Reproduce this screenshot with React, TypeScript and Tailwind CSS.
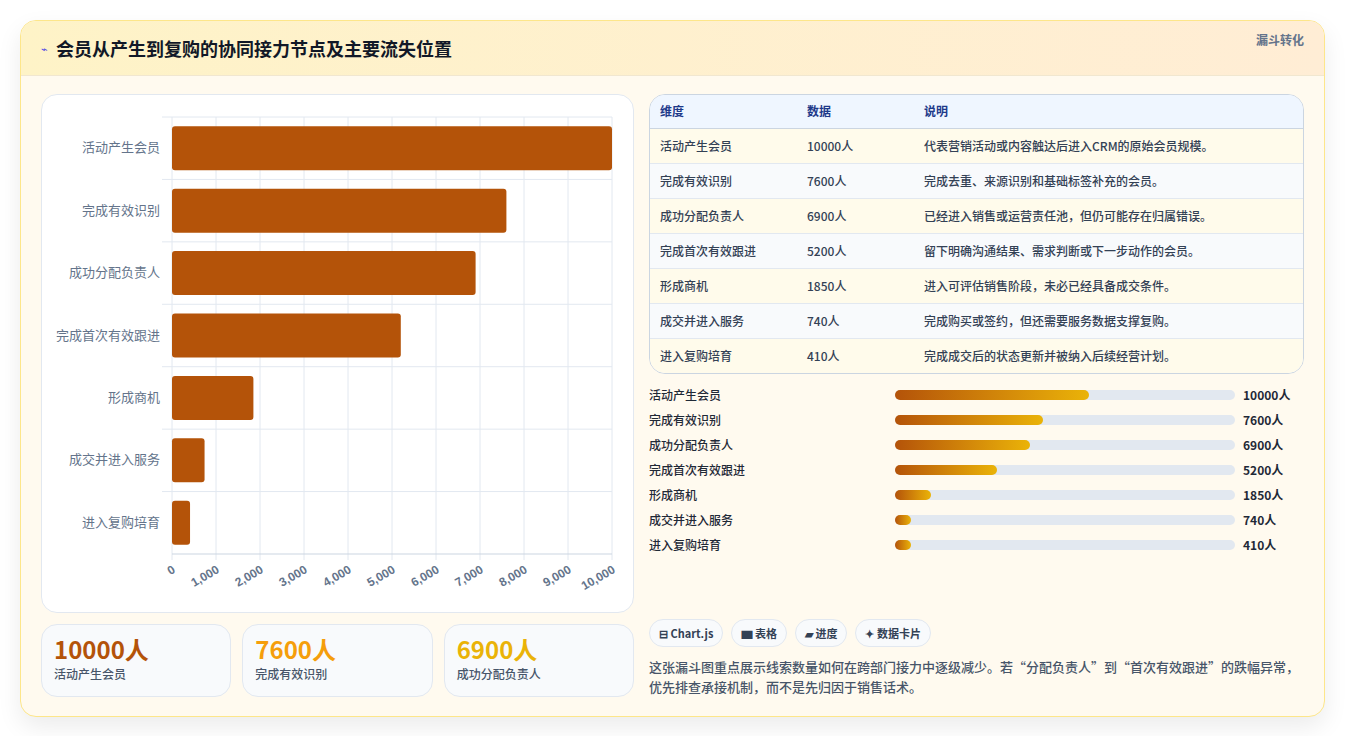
import React from 'react';

const steps = [
  { name: '活动产生会员', value: 10000, desc: '代表营销活动或内容触达后进入CRM的原始会员规模。', pct: 57 },
  { name: '完成有效识别', value: 7600, desc: '完成去重、来源识别和基础标签补充的会员。', pct: 43.5 },
  { name: '成功分配负责人', value: 6900, desc: '已经进入销售或运营责任池，但仍可能存在归属错误。', pct: 39.7 },
  { name: '完成首次有效跟进', value: 5200, desc: '留下明确沟通结果、需求判断或下一步动作的会员。', pct: 30 },
  { name: '形成商机', value: 1850, desc: '进入可评估销售阶段，未必已经具备成交条件。', pct: 10.5 },
  { name: '成交并进入服务', value: 740, desc: '完成购买或签约，但还需要服务数据支撑复购。', pct: 4.8 },
  { name: '进入复购培育', value: 410, desc: '完成成交后的状态更新并被纳入后续经营计划。', pct: 4.8 },
];

const font = { fontFamily: '"Noto Sans CJK SC", "Noto Sans", sans-serif' };

function FunnelChart() {
  const x0 = 130;
  const x1 = 570;
  const y0 = 22;
  const y1 = 459;
  const rowH = (y1 - y0) / steps.length;
  const ticks = Array.from({ length: 11 }, (_, i) => i * 1000);
  return (
    <svg width="593" height="517" className="block">
      {ticks.map((t) => {
        const x = x0 + (t / 10000) * (x1 - x0);
        return <line key={t} x1={x} x2={x} y1={y0} y2={y1 + 6} stroke="#e2e8f0" strokeWidth="1" />;
      })}
      {steps.map((s, i) => (
        <line key={s.name} x1={x0 - 10} x2={x1} y1={y0 + rowH * i} y2={y0 + rowH * i} stroke="#e2e8f0" strokeWidth="1" />
      ))}
      <line x1={x0} x2={x1} y1={y1} y2={y1} stroke="#cbd5e1" strokeWidth="1" />
      {steps.map((s, i) => {
        const cy = y0 + rowH * i + rowH / 2;
        const w = (s.value / 10000) * (x1 - x0);
        return (
          <g key={s.name}>
            <rect x={x0} y={cy - 22} width={w} height={44} rx="3" fill="#b45309" />
            <text x={x0 - 12} y={cy + 4} textAnchor="end" fontSize="13" fill="#64748b" style={font}>
              {s.name}
            </text>
          </g>
        );
      })}
      {ticks.map((t) => {
        const x = x0 + (t / 10000) * (x1 - x0);
        return (
          <text
            key={t}
            x={x + 4}
            y={y1 + 18}
            textAnchor="end"
            fontSize="12"
            fontWeight="700"
            fill="#64748b"
            transform={`rotate(-30 ${x + 4} ${y1 + 18})`}
            style={{ fontFamily: '"Liberation Sans", sans-serif' }}
          >
            {t.toLocaleString('en-US')}
          </text>
        );
      })}
    </svg>
  );
}

export default function App() {
  return (
    <div className="min-h-screen bg-white px-5 py-5" style={font}>
      <div className="overflow-hidden rounded-2xl border border-[#fde68a] bg-[#fffaef] shadow-[0_10px_25px_rgba(0,0,0,0.08)]">
        {/* Header */}
        <div className="flex h-[55px] items-center justify-between border-b border-[#f1e7d0] bg-gradient-to-r from-[#fef3c7] to-[#ffedd5] px-5">
          <div className="flex items-center gap-2">
            <span className="text-[11px] text-[#4f46e5]">⌁</span>
            <h1 className="text-lg font-bold text-[#111827]">会员从产生到复购的协同接力节点及主要流失位置</h1>
          </div>
          <span className="-mt-4 text-xs font-bold text-[#64748b]">漏斗转化</span>
        </div>

        <div className="flex gap-[15px] px-5 pt-[18px] pb-[19px]">
          {/* Left */}
          <div className="flex w-[593px] flex-col gap-[11px]">
            <div className="h-[519px] rounded-2xl border border-[#e2e8f0] bg-white">
              <FunnelChart />
            </div>
            <div className="grid grid-cols-3 gap-[11px]">
              {[
                { v: '10000人', l: '活动产生会员', c: 'text-[#b45309]' },
                { v: '7600人', l: '完成有效识别', c: 'text-[#f59e0b]' },
                { v: '6900人', l: '成功分配负责人', c: 'text-[#eab308]' },
              ].map((k) => (
                <div key={k.l} className="h-[73px] rounded-2xl border border-[#e2e8f0] bg-[#f8fafc] px-3 pt-[9px]">
                  <div className={`text-[24px] leading-[30px] font-bold ${k.c}`}>{k.v}</div>
                  <div className="mt-[2px] text-xs font-medium text-[#475569]">{k.l}</div>
                </div>
              ))}
            </div>
          </div>

          {/* Right */}
          <div className="flex flex-1 flex-col">
            <div className="overflow-hidden rounded-2xl border border-[#cbd5e1] bg-white">
              <table className="w-full text-left text-xs">
                <thead>
                  <tr className="h-[33px] border-b border-[#cbd5e1] bg-[#eff6ff] text-[#1e3a8a]">
                    <th className="w-[157px] pl-[10px] font-bold">维度</th>
                    <th className="w-[117px] font-bold">数据</th>
                    <th className="font-bold">说明</th>
                  </tr>
                </thead>
                <tbody>
                  {steps.map((s, i) => (
                    <tr
                      key={s.name}
                      className={`h-[35px] font-medium text-[#334155] ${i < steps.length - 1 ? 'border-b border-[#e2e8f0]' : ''} ${
                        i % 2 === 0 ? 'bg-[#fffbeb]' : 'bg-[#f8fafc]'
                      }`}
                    >
                      <td className="pl-[10px]">{s.name}</td>
                      <td>{s.value}人</td>
                      <td>{s.desc}</td>
                    </tr>
                  ))}
                </tbody>
              </table>
            </div>

            <div className="mt-[12px] flex flex-col gap-[7px]">
              {steps.map((s) => (
                <div key={s.name} className="flex h-[18px] items-center text-xs font-medium text-[#1f2937]">
                  <span className="w-[246px]">{s.name}</span>
                  <div className="h-[10px] w-[340px] rounded-full bg-[#e2e8f0]">
                    <div
                      className="h-full rounded-full bg-gradient-to-r from-[#b45309] to-[#eab308]"
                      style={{ width: `${s.pct}%` }}
                    />
                  </div>
                  <span className="ml-2 font-bold">{s.value}人</span>
                </div>
              ))}
            </div>

            <div className="mt-auto flex gap-[8px]">
              {['⊟ Chart.js', '▆ 表格', '▰ 进度', '✦ 数据卡片'].map((c) => (
                <span
                  key={c}
                  className="flex h-[28px] items-center rounded-full border border-[#e2e8f0] bg-[#f8fafc] px-[9px] text-[11px] font-bold text-[#334155]"
                >
                  {c}
                </span>
              ))}
            </div>
            <p className="mt-[10px] text-[13px] leading-[20px] font-medium text-[#475569]">
              这张漏斗图重点展示线索数量如何在跨部门接力中逐级减少。若“分配负责人”到“首次有效跟进”的跌幅异常，优先排查承接机制，而不是先归因于销售话术。
            </p>
          </div>
        </div>
      </div>
    </div>
  );
}
